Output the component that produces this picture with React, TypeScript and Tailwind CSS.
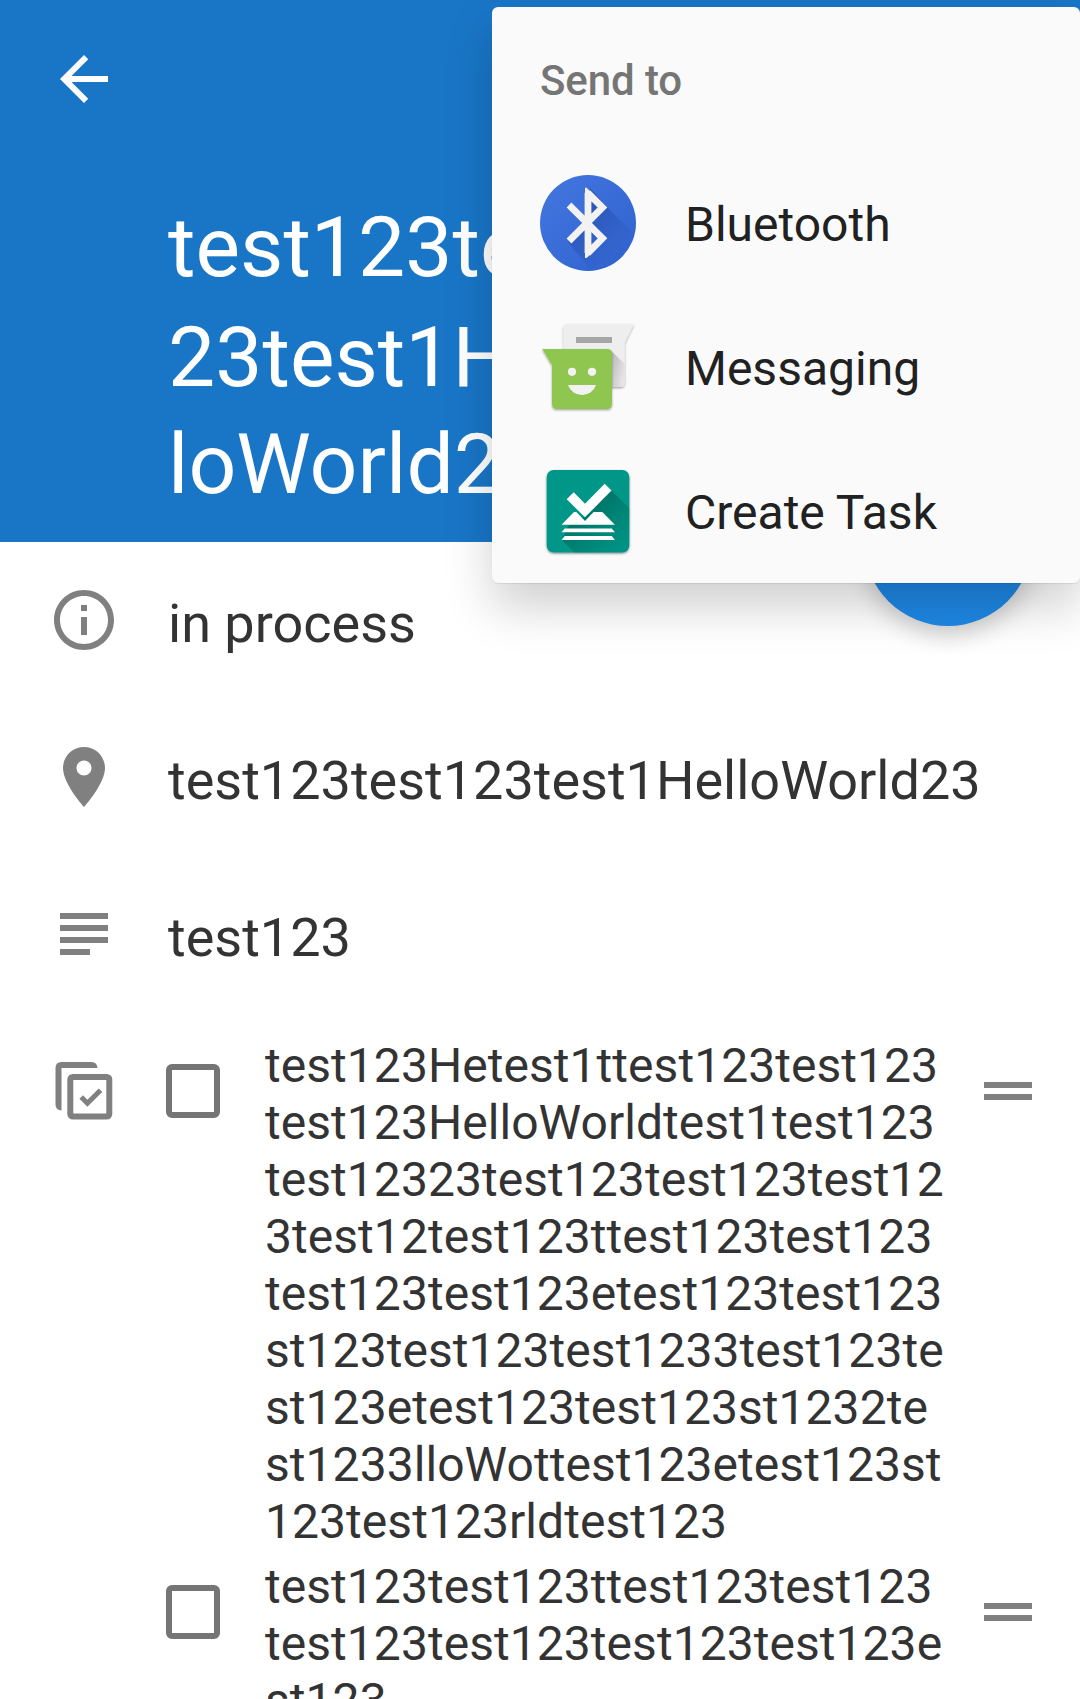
import React from "react";

const titleLines = [
  { text: "test123test1", cls: "h-[110px] leading-[110px]" },
  { text: "23test1Hel", cls: "h-[110px] leading-[110px]" },
  { text: "loWorld23", cls: "h-[104px] leading-[104px]" },
];

const checklist = [
  [
    "test123Hetest1ttest123test123",
    "test123HelloWorldtest1test123",
    "test12323test123test123test12",
    "3test12test123ttest123test123",
    "test123test123etest123test123",
    "st123test123test1233test123te",
    "st123etest123test123st1232te",
    "st1233lloWottest123etest123st",
    "123test123rldtest123",
  ],
  ["test123test123ttest123test123", "test123test123test123test123e", "st123"],
];

function Icon({ d, className = "" }: { d: string; className?: string }) {
  return (
    <svg viewBox="0 0 24 24" className={`size-[72px] shrink-0 ${className}`} fill="currentColor">
      <path d={d} />
    </svg>
  );
}

function BluetoothIcon() {
  return (
    <svg viewBox="0 0 96 96" className="size-24 shrink-0">
      <defs>
        <linearGradient id="btBase" x1="0" y1="0" x2="1" y2="1">
          <stop offset="0" stopColor="#4376df" />
          <stop offset="1" stopColor="#3062cf" />
        </linearGradient>
        <linearGradient id="btShade" gradientUnits="userSpaceOnUse" x1="40" y1="40" x2="76" y2="76">
          <stop offset="0" stopColor="#1d3f96" stopOpacity=".5" />
          <stop offset="1" stopColor="#1d3f96" stopOpacity="0.04" />
        </linearGradient>
        <clipPath id="btClip">
          <circle cx="48" cy="48" r="48" />
        </clipPath>
      </defs>
      <circle cx="48" cy="48" r="48" fill="url(#btBase)" />
      <g clipPath="url(#btClip)">
        <path d="M50 13L67 32L110 75V130H80L28 67L48 48Z" fill="url(#btShade)" />
      </g>
      <path
        d="M29 30L62.500 63.300L48 78V18L62.500 32.500L29 66"
        fill="none"
        stroke="#f2f2f2"
        strokeWidth="6.800"
        strokeMiterlimit="2.4"
      />
      <path d="M45 83V12.700H46.500L51 17V79L46.500 83Z" fill="#f2f2f2" />
    </svg>
  );
}

function MessagingIcon() {
  return (
    <svg viewBox="0 0 96 96" className="size-24 shrink-0 overflow-visible">
      <defs>
        <linearGradient id="msgShade" x1="0" y1="0" x2="1" y2="0.6">
          <stop offset="0" stopColor="#000" stopOpacity=".25" />
          <stop offset="1" stopColor="#000" stopOpacity=".04" />
        </linearGradient>
        <filter id="msgDrop" x="-20%" y="-20%" width="140%" height="140%">
          <feDropShadow dx="0" dy="1.2" stdDeviation="0.9" floodColor="#000" floodOpacity=".35" />
        </filter>
      </defs>
      <path
        d="M28 5H93.8L84.7 23.7V63.5Q84.7 68 80 68H28Q23.5 68 23.5 63V9.500Q23.500 5 28 5Z"
        fill="#eeeeee"
        filter="url(#msgDrop)"
      />
      <path d="M70.500 31L84.700 45V63.500Q84.700 68 80 68H70Z" fill="url(#msgShade)" />
      <rect x="36" y="18" width="36" height="6" fill="#a6a6a6" />
      <path
        d="M2.200 30H67Q72 30 72 35V85Q72 90 67 90H17Q12 90 12 85V46.500Z"
        fill="#8fc64f"
        filter="url(#msgDrop)"
      />
      <circle cx="32" cy="52.800" r="4.100" fill="#f2f2f2" />
      <circle cx="52" cy="52.800" r="4.100" fill="#f2f2f2" />
      <path d="M28 66H56A14.800 14.800 0 0 1 28 66Z" fill="#f2f2f2" />
    </svg>
  );
}

function TaskIcon() {
  return (
    <svg viewBox="0 0 96 96" className="size-24 shrink-0 overflow-visible">
      <defs>
        <linearGradient id="taskShade" gradientUnits="userSpaceOnUse" x1="45" y1="40" x2="86" y2="86">
          <stop offset="0" stopColor="#00695c" stopOpacity=".85" />
          <stop offset="1" stopColor="#00796b" stopOpacity=".1" />
        </linearGradient>
        <clipPath id="taskClip">
          <rect x="6.700" y="7" width="82.600" height="82.500" rx="7" />
        </clipPath>
        <filter id="taskDrop" x="-20%" y="-20%" width="140%" height="140%">
          <feDropShadow dx="0" dy="1" stdDeviation="0.8" floodColor="#000" floodOpacity=".5" />
        </filter>
      </defs>
      <rect x="6.700" y="7" width="82.600" height="82.500" rx="7" fill="#009688" filter="url(#taskDrop)" />
      <g clipPath="url(#taskClip)">
        <path d="M33 30L45 41L71.300 27.300L96 52V96H41L21.700 77L30 60L45 54Z" fill="url(#taskShade)" />
      </g>
      <g fill="#fff">
        <path d="M26.700 36.300L33.700 29.300L45 40.700L64.700 20.700L71.500 27.500L45 54.300Z" />
        <path d="M34 49H36.300L45 57.900L53.600 49H62.300L74.900 61.800H21.500Z" />
        <path d="M24.700 65.500H71.700L74.900 69.300H21.500Z" />
        <path d="M24.700 73H71.700L74.900 77H21.500Z" />
      </g>
    </svg>
  );
}

function ChecklistIcon() {
  return (
    <svg viewBox="0 0 60 60" className="size-[60px] shrink-0" fill="none" stroke="#808080">
      <path d="M6.500 48.500Q.5 48 .5 42.500V6Q.5 0 6.500 0H36.500Q42 0 42.500 6H6.500Z" fill="#808080" stroke="none" />
      <rect x="15.300" y="15" width="39" height="39.500" rx="2.500" strokeWidth="6" />
      <path d="M26.200 35L32.400 41.200L45.500 28.200" strokeWidth="5" />
    </svg>
  );
}

function InfoRow({ d, text }: { d: string; text: string }) {
  return (
    <div className="flex h-[157px] items-center pl-12">
      <Icon d={d} className="text-[#808080]" />
      <span className="pt-2 pl-12 text-[54px] leading-[64px]">{text}</span>
    </div>
  );
}

function MenuItem({ icon, label }: { icon: React.ReactNode; label: string }) {
  return (
    <li className="flex h-36 items-center gap-[49px] pl-12">
      {icon}
      <span className="pt-0.5 text-[48px] leading-[57px]">{label}</span>
    </li>
  );
}

export default function App() {
  return (
    <div className="relative h-[1699px] w-[1080px] overflow-hidden bg-white font-['Roboto',sans-serif] text-[#333333]">
      <header className="h-[542px] bg-[#1976c7] text-white">
        <div className="h-[193px] pt-[43px] pl-12">
          <Icon d="M20 11H7.83l5.59-5.59L12 4l-8 8 8 8 1.41-1.41L7.83 13H20v-2z" />
        </div>
        <h1 className="pl-[168px] text-[84px] font-normal whitespace-nowrap">
          {titleLines.map((l) => (
            <span key={l.text} className={`block ${l.cls}`}>
              {l.text}
            </span>
          ))}
        </h1>
      </header>

      <main>
        <div className="-mt-px">
          <InfoRow
            text="in process"
            d="M11 17h2v-6h-2v6zm1-15C6.48 2 2 6.480 2 12s4.480 10 10 10 10-4.480 10-10S17.520 2 12 2zm0 18c-4.410 0-8-3.590-8-8s3.590-8 8-8 8 3.590 8 8-3.590 8-8 8zM11 9h2V7h-2v2z"
          />
          <InfoRow
            text="test123test123test1HelloWorld23"
            d="M12 2C8.130 2 5 5.130 5 9c0 5.250 7 13 7 13s7-7.750 7-13c0-3.870-3.130-7-7-7zm0 9.500c-1.380 0-2.500-1.120-2.500-2.500s1.120-2.500 2.500-2.500 2.500 1.120 2.500 2.500-1.120 2.500-2.500 2.500z"
          />
          <InfoRow text="test123" d="M4 5h16v2H4zM4 9h16v2H4zM4 13h16v2H4zM4 17h10v2H4z" />
        </div>

        <section className="flex pt-[25px]">
          <div className="w-[166px] shrink-0 pt-[25px] pl-[55px]">
            <ChecklistIcon />
          </div>
          <ul className="flex flex-col gap-2">
            {checklist.map((lines, i) => (
              <li key={i} className="flex items-start">
                <span className="mt-[27px] size-[54px] shrink-0 rounded-[6px] border-[6px] border-[#757575]" />
                <p className="w-[764px] pl-[45px] text-[48px] leading-[57px] tracking-[0.05px] whitespace-nowrap">
                  {lines.map((line) => (
                    <span key={line} className="block">
                      {line}
                    </span>
                  ))}
                </p>
                <span className="mt-[45px] h-[18px] w-12 shrink-0 border-y-[6px] border-[#808080]" />
              </li>
            ))}
          </ul>
        </section>
      </main>

      <button
        aria-label="Edit"
        className="absolute top-[458px] left-[864px] size-[168px] rounded-full bg-[#1e88e5] shadow-[0_10px_22px_rgba(0,0,0,0.18)]"
      />

      <div className="absolute top-[7px] right-0 w-[588px] rounded-[6px] bg-[#fafafa] text-[#212121] shadow-[0_1px_1px_rgba(0,0,0,0.08),0_24px_48px_rgba(0,0,0,0.19)]">
        <div className="flex h-36 items-center pt-1 pl-12 text-[42px] leading-[50px] font-medium tracking-[-0.1px] text-[#757575]">
          Send to
        </div>
        <ul>
          <MenuItem icon={<BluetoothIcon />} label="Bluetooth" />
          <MenuItem icon={<MessagingIcon />} label="Messaging" />
          <MenuItem icon={<TaskIcon />} label="Create Task" />
        </ul>
      </div>
    </div>
  );
}
